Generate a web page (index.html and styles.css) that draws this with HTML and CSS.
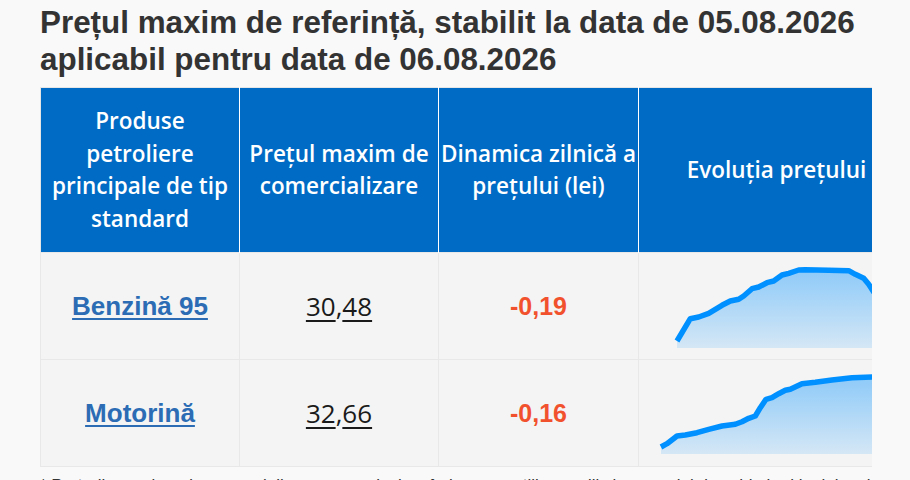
FILE: index.html
```html
<!DOCTYPE html>
<html lang="ro">
<head>
<meta charset="utf-8">
<title>Prețul maxim de referință</title>
<link rel="stylesheet" href="styles.css">
</head>
<body>
<div class="wrap">
  <h1 class="title">Prețul maxim de referință, stabilit la data de 05.08.2026 aplicabil pentru data de 06.08.2026</h1>
  <table class="prices">
    <colgroup>
      <col class="c1"><col class="c2"><col class="c3"><col class="c4">
    </colgroup>
    <thead>
      <tr>
        <th>Produse<br>petroliere<br>principale de tip<br>standard</th>
        <th>Prețul maxim de<br>comercializare</th>
        <th>Dinamica zilnică a<br>prețului (lei)</th>
        <th>Evoluția prețului</th>
      </tr>
    </thead>
    <tbody>
      <tr>
        <td><a class="fuel" href="#">Benzină 95</a></td>
        <td><span class="price"><span class="u">30</span>,<span class="u">48</span></span></td>
        <td><span class="delta">-0,19</span></td>
        <td class="chart">
          <svg width="276" height="106" viewBox="0 0 276 106">
            <defs>
              <linearGradient id="g1" x1="0" y1="0" x2="0" y2="1">
                <stop offset="0" stop-color="#0090ff" stop-opacity="0.42"/>
                <stop offset="1" stop-color="#0090ff" stop-opacity="0.13"/>
              </linearGradient>
            </defs>
            <path fill="url(#g1)" d="M38,88 L51.3,65.7 L59.7,64 L69.7,60.3 L83,52.3 L91.3,48 L99.7,46.3 L104.7,43 L113,35.7 L119.7,34 L128,29.7 L134.7,28 L143,22 L149.7,20.3 L159.7,17 L166.3,16.7 L189.7,17.3 L209.7,17.7 L216.3,21.3 L224.7,25.3 L229.7,31.3 L234.7,39 L245,52 L276,60 L276,95 L38,95 Z"/>
            <path fill="none" stroke="#0090ff" stroke-width="5.5" stroke-linejoin="round" d="M38,88 L51.3,65.7 L59.7,64 L69.7,60.3 L83,52.3 L91.3,48 L99.7,46.3 L104.7,43 L113,35.7 L119.7,34 L128,29.7 L134.7,28 L143,22 L149.7,20.3 L159.7,17 L166.3,16.7 L189.7,17.3 L209.7,17.7 L216.3,21.3 L224.7,25.3 L229.7,31.3 L234.7,39 L245,52 L276,60"/>
          </svg>
        </td>
      </tr>
      <tr>
        <td><a class="fuel" href="#">Motorină</a></td>
        <td><span class="price"><span class="u">32</span>,<span class="u">66</span></span></td>
        <td><span class="delta">-0,16</span></td>
        <td class="chart">
          <svg width="276" height="106" viewBox="0 0 276 106">
            <defs>
              <linearGradient id="g2" x1="0" y1="0" x2="0" y2="1">
                <stop offset="0" stop-color="#0090ff" stop-opacity="0.42"/>
                <stop offset="1" stop-color="#0090ff" stop-opacity="0.13"/>
              </linearGradient>
            </defs>
            <path fill="url(#g2)" d="M22,87 L28,83.7 L38,76 L46.3,75 L58,72.7 L69.7,69.3 L83,66 L96.3,64.3 L103,61.7 L109.7,58.3 L116.3,56 L121.3,47.7 L127,39.3 L133,37.7 L139.7,33.7 L146.3,30.3 L151.3,29.3 L163,23.7 L176.3,22.3 L193,20 L213,17.7 L234.7,17 L276,17 L276,94 L22,94 Z"/>
            <path fill="none" stroke="#0090ff" stroke-width="5.5" stroke-linejoin="round" d="M22,87 L28,83.7 L38,76 L46.3,75 L58,72.7 L69.7,69.3 L83,66 L96.3,64.3 L103,61.7 L109.7,58.3 L116.3,56 L121.3,47.7 L127,39.3 L133,37.7 L139.7,33.7 L146.3,30.3 L151.3,29.3 L163,23.7 L176.3,22.3 L193,20 L213,17.7 L234.7,17 L276,17"/>
          </svg>
        </td>
      </tr>
    </tbody>
  </table>
  <p class="note">* Prețurile maxime de comercializare sunt calculate în baza cotațiilor medii și a cursului de schimb al leului moldovenesc</p>
</div>
</body>
</html>
```

FILE: styles.css
```css
html, body {
  margin: 0;
  padding: 0;
  background: #f9f9f9;
}

.wrap {
  margin-left: 40px;
  width: 832px;
  overflow: hidden;
}

.title {
  margin: 5px 0 9px;
  font-family: "Liberation Sans", Arial, sans-serif;
  font-weight: bold;
  font-size: 31.4px;
  line-height: 36.5px;
  color: #333333;
}

.prices {
  border-collapse: collapse;
  table-layout: fixed;
  width: 874px;
  border: 1px solid #e6e6e6;
}

.c1 { width: 199px; }
.c2 { width: 199px; }
.c3 { width: 200px; }
.c4 { width: 276px; }

.prices th {
  height: 165px;
  padding: 0 1px;
  box-sizing: border-box;
  background: #006bc5;
  color: #ffffff;
  border-left: 1px solid #ffffff;
  border-right: 1px solid #ffffff;
  font-family: "Open Sans", "Noto Sans", sans-serif;
  font-weight: 600;
  font-size: 22.5px;
  line-height: 32.5px;
  text-align: center;
  vertical-align: middle;
  white-space: nowrap;
}

.prices th:first-child { border-left-color: #e6e6e6; }

.prices td {
  height: 106px;
  padding: 0;
  background: #f4f4f4;
  border: 1px solid #e8e8e8;
  text-align: center;
  vertical-align: middle;
}

.fuel {
  font-family: "Liberation Sans", Arial, sans-serif;
  font-weight: bold;
  font-size: 26px;
  color: #2b6cb5;
  text-decoration: underline;
  text-decoration-thickness: 2px;
  text-underline-offset: 3px;
}

.price {
  font-family: "Open Sans", "Noto Sans", sans-serif;
  font-size: 26px;
  color: #1a1a1a;
}

.price .u {
  text-decoration: underline;
  text-decoration-thickness: 2px;
  text-underline-offset: 4px;
}

.delta {
  font-family: "Liberation Sans", Arial, sans-serif;
  font-weight: bold;
  font-size: 25px;
  color: #f2512d;
}

.prices td.chart {
  text-align: left;
  vertical-align: top;
}

.chart svg {
  display: block;
}

.note {
  margin: 7px 0 0;
  font-family: "Liberation Sans", Arial, sans-serif;
  font-size: 17px;
  line-height: 24px;
  color: #333333;
  white-space: nowrap;
}
```
